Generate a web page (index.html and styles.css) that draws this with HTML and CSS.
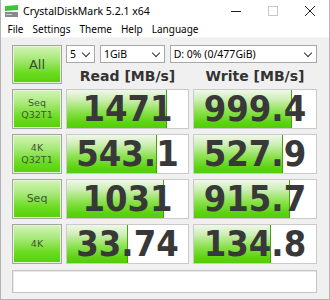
FILE: index.html
```html
<!doctype html>
<html lang="en">
<head>
<meta charset="UTF-8">
<title>CrystalDiskMark 5.2.1 x64</title>
<link rel="stylesheet" href="styles.css">
</head>
<body>
<div class="window">
	<div class="titlebar">
		<svg class="appicon" width="15" height="13" viewBox="0 0 15 13">
			<path d="M1 1 L14 0 L14 5 L1 6 Z" fill="#3cc43c"/>
			<rect x="1" y="7" width="13" height="5" fill="#8a8a8a"/>
			<rect x="2" y="9" width="6" height="1" fill="#d0d0d0"/>
		</svg>
		<span class="title">CrystalDiskMark 5.2.1 x64</span>
		<div class="winbtns">
			<span class="wb"><svg width="10" height="10" viewBox="0 0 10 10"><path d="M0 5.5 H10" stroke="#222" stroke-width="1"/></svg></span>
			<span class="wb"><svg width="10" height="10" viewBox="0 0 10 10"><rect x="0.5" y="0.5" width="9" height="9" fill="none" stroke="#c8c8c8"/></svg></span>
			<span class="wb"><svg width="10" height="10" viewBox="0 0 10 10"><path d="M0 0 L10 10 M10 0 L0 10" stroke="#222" stroke-width="1"/></svg></span>
		</div>
	</div>
	<ul class="menu">
		<li>File</li>
		<li>Settings</li>
		<li>Theme</li>
		<li>Help</li>
		<li>Language</li>
	</ul>
	<div class="client">
		<div class="grid">
			<div class="btn btn-all">All</div>
			<div class="selects">
				<div class="sel s-count">5<span class="chev"></span></div>
				<div class="sel s-size">1GiB<span class="chev"></span></div>
				<div class="sel s-drive">D: 0% (0/477GiB)<span class="chev"></span></div>
			</div>
			<div class="head">Read [MB/s]</div>
			<div class="head">Write [MB/s]</div>

			<div class="btn">Seq<br>Q32T1</div>
			<div class="cell"><div class="bar" style="width:83%"></div><span class="val">1471</span></div>
			<div class="cell"><div class="bar" style="width:80%"></div><span class="val">999.4</span></div>

			<div class="btn">4K<br>Q32T1</div>
			<div class="cell"><div class="bar" style="width:74%"></div><span class="val">543.1</span></div>
			<div class="cell"><div class="bar" style="width:73%"></div><span class="val">527.9</span></div>

			<div class="btn btn-big">Seq</div>
			<div class="cell"><div class="bar" style="width:80%"></div><span class="val">1031</span></div>
			<div class="cell"><div class="bar" style="width:79%"></div><span class="val">915.7</span></div>

			<div class="btn">4K</div>
			<div class="cell"><div class="bar" style="width:50%"></div><span class="val">33.74</span></div>
			<div class="cell"><div class="bar" style="width:63%"></div><span class="val">134.8</span></div>

			<div class="comment"></div>
		</div>
	</div>
</div>
</body>
</html>
```

FILE: styles.css
```css
* {margin:0;padding:0;box-sizing:border-box;}
html,body{width:330px;height:300px;overflow:hidden;}
body{font-family:"Noto Sans","Open Sans",sans-serif;font-size:12px;color:#000;background:#fff;}
ul,li{list-style:none;}

.window{width:330px;height:300px;display:flex;flex-direction:column;border:1px solid #b4b4b4;border-top:none;}

.titlebar{height:22px;display:flex;align-items:center;background:#fff;}
.appicon{margin:0 4px 0 3px;}
.title{font-size:10.5px;line-height:22px;}
.winbtns{margin-left:auto;margin-right:1px;display:flex;height:22px;}
.winbtns .wb{width:37px;display:flex;align-items:center;justify-content:center;}

.menu{display:flex;height:15px;align-items:center;background:#fff;padding-left:2px;}
.menu li{padding:0 4.5px;font-size:10px;line-height:15px;}

.client{flex:1;background:#f0f0f0;padding:7px 0 0 11px;border-top:1px solid #f4f4f4;}
.grid{display:grid;grid-template-columns:50px 123px 124px;grid-template-rows:18px 16px repeat(4,40px) 24px;column-gap:4px;row-gap:5px;}

.btn{display:flex;align-items:center;justify-content:center;text-align:center;
	font-family:"DejaVu Sans",sans-serif;font-size:9.5px;line-height:12px;color:#3d5a2c;
	border:1px solid #a4a4a4;box-shadow:inset 0 0 0 1px #e6f7d8;
	background:linear-gradient(#d4f4b8 0%,#a8e97a 35%,#6edc24 70%,#55d006 100%);}
.btn-all{grid-row:1 / span 2;font-size:13px;color:#3a4a30;height:39px;}
.btn-big{font-size:11px;}

.selects{grid-column:2 / span 2;display:flex;gap:5px;}
.sel{position:relative;height:18px;background:#fff;border:1px solid #a8a8a8;font-size:10.5px;line-height:16px;padding-left:3px;}
.s-count{width:29px;}
.s-size{width:65px;}
.s-drive{width:148px;}
.chev{position:absolute;right:5px;top:4px;width:6px;height:6px;border-right:1.3px solid #333;border-bottom:1.3px solid #333;transform:rotate(45deg);}

.head{text-align:center;font-family:"DejaVu Sans",sans-serif;font-weight:bold;font-size:14px;line-height:16px;color:#333;}

.cell{position:relative;background:#fff;border:1px solid #cacaca;overflow:hidden;}
.bar{height:100%;border-right:1px solid #46a010;
	background:linear-gradient(#f0f8ea 0%,#cdeeb4 25%,#86e046 60%,#5cd412 85%,#54cc08 100%);}
.val{position:absolute;left:0;right:0;top:0;bottom:0;text-align:center;
	font-family:"DejaVu Sans Condensed","DejaVu Sans",sans-serif;font-stretch:condensed;font-weight:bold;
	font-size:36px;line-height:38px;color:#383838;}

.comment{grid-column:1 / span 3;background:#fff;border:1px solid #c4c4c4;box-shadow:inset 1px 1px 0 #e8e8e8;margin-top:1px;}
```
